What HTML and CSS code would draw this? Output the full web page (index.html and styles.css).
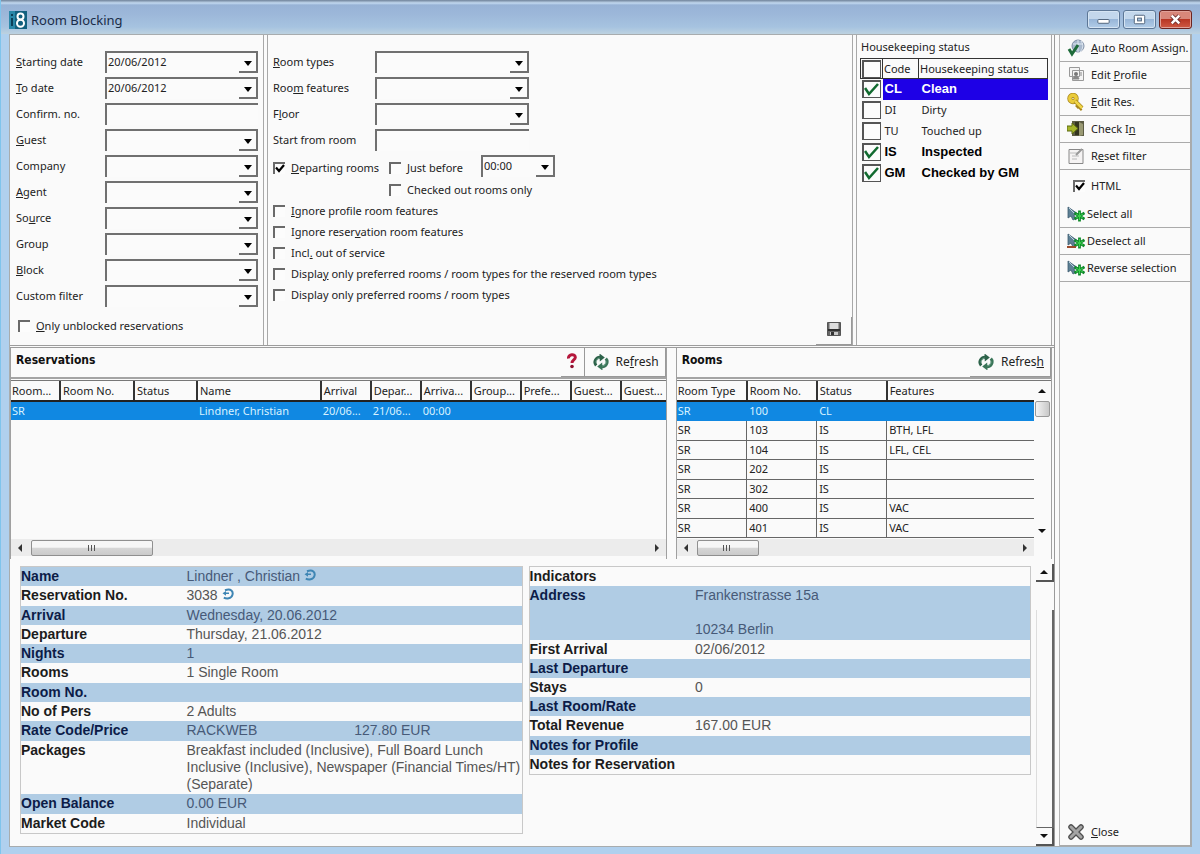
FILE: index.html
```html
<!DOCTYPE html>
<html lang="en">
<head>
<meta charset="utf-8">
<title>Room Blocking</title>
<link rel="stylesheet" href="styles.css">
</head>
<body>
<svg class="defs" aria-hidden="true">
  <symbol id="refresh" viewBox="0 0 16 16">
    <path d="M3.200 11.500A5 5 0 0 1 7 3.200" fill="none" stroke="#2c6249" stroke-width="3"/>
    <path d="M6.500 -.5 11.800 3.400 6.800 7.400z" fill="#2c6249"/>
    <path d="M12.800 4.500A5 5 0 0 1 9 12.800" fill="none" stroke="#3a7558" stroke-width="3"/>
    <path d="M9.500 16.500 4.200 12.600 9.200 8.600z" fill="#3a7558"/>
    <path d="M3 8.500C3 6 4.500 4.500 6.500 4M13 7.500c0 2.500-1.500 4-3.500 4.500" fill="none" stroke="#8dbba4" stroke-width=".8"/>
  </symbol>
  <symbol id="pick" viewBox="0 0 18 16">
    <path d="M1 1v11l3-2 2 4 2-1-1-4 4-1z" fill="#5d8094" stroke="#3c5a70" stroke-width=".8"/>
    <path d="M2 2l5 5" stroke="#bcd3df" stroke-width="1"/>
    <path d="M12.500 4.500v11M7.500 7l10 6M17.500 7l-10 6" stroke="#128a2c" stroke-width="2.800"/>
    <path d="M12.500 6v8M9 8l7 4M16 8l-7 4" stroke="#3ad04c" stroke-width="1"/>
  </symbol>
  <symbol id="goto" viewBox="0 0 12 12">
    <path d="M3 2.200C9-.2 11.500 3.500 10.400 7 9.300 10.800 4.500 11 1.800 9.600" fill="none" stroke="#3f86b4" stroke-width="2"/>
    <path d="M.5 5.200 4 3v1.600h3v1.500H4v1.600z" fill="#3f86b4"/>
  </symbol>
</svg>
<div class="window">
  <header class="titlebar">
    <svg class="logo" viewBox="0 0 18 18" aria-hidden="true">
      <rect width="18" height="18" fill="#12607f"/>
      <path d="M0 0h6v18H0z" fill="#2a87a8"/>
      <path d="M3 7v8M3 3v2" stroke="#0c3f58" stroke-width="2"/>
      <circle cx="11.500" cy="5.500" r="3" fill="none" stroke="#fff" stroke-width="2"/>
      <circle cx="11.500" cy="12.300" r="3.500" fill="none" stroke="#fff" stroke-width="2"/>
    </svg>
    <h1>Room Blocking</h1>
    <div class="winbtns">
      <button aria-label="Minimize"><svg viewBox="0 0 32 18"><rect x="10" y="9" width="12" height="4" rx="1" fill="#fff" stroke="#4b6078"/></svg></button>
      <button aria-label="Maximize"><svg viewBox="0 0 32 18"><rect x="10.500" y="4.500" width="11" height="9" rx="1" fill="#fff" stroke="#4b6078"/><rect x="14" y="7.500" width="4" height="3" fill="#a9c5e2" stroke="#4b6078"/></svg></button>
      <button class="x" aria-label="Close window"><svg viewBox="0 0 32 18"><path d="M12 5l8 8M20 5l-8 8" stroke="#6d3030" stroke-width="4.500"/><path d="M12 5l8 8M20 5l-8 8" stroke="#fff" stroke-width="2.600"/></svg></button>
    </div>
  </header>

  <div class="client">
    <main>
      <section class="filters">
        <form class="pane guestform">
          <div class="fields">
            <label for="start"><u>S</u>tarting date</label><select id="start"><option>20/06/2012</option></select>
            <label for="to"><u>T</u>o date</label><select id="to"><option>20/06/2012</option></select>
            <label for="conf">Confirm. no.</label><input id="conf" type="text">
            <label for="guest"><u>G</u>uest</label><select id="guest"><option></option></select>
            <label for="company">Company</label><select id="company"><option></option></select>
            <label for="agent"><u>A</u>gent</label><select id="agent"><option></option></select>
            <label for="source">So<u>u</u>rce</label><select id="source"><option></option></select>
            <label for="group">Group</label><select id="group"><option></option></select>
            <label for="block"><u>B</u>lock</label><select id="block"><option></option></select>
            <label for="custom">Custom filter</label><select id="custom"><option></option></select>
          </div>
          <label class="check only"><input type="checkbox"><span><u>O</u>nly unblocked reservations</span></label>
        </form>

        <form class="pane roomform">
          <div class="fields">
            <label for="types"><u>R</u>oom types</label><select id="types"><option></option></select>
            <label for="feat">Roo<u>m</u> features</label><select id="feat"><option></option></select>
            <label for="floor">F<u>l</u>oor</label><select id="floor"><option></option></select>
            <label for="from">Start from room</label><input id="from" type="text">
          </div>
          <div class="departing">
            <label class="check first"><input type="checkbox" checked><span><u>D</u>eparting rooms</span></label>
            <label class="check before"><input type="checkbox"><span>Just before</span></label>
            <select aria-label="Time"><option>00:00</option></select>
          </div>
          <div class="checks">
            <label class="check sub"><input type="checkbox"><span>Checked out rooms only</span></label>
            <label class="check"><input type="checkbox"><span><u>I</u>gnore profile room features</span></label>
            <label class="check"><input type="checkbox"><span>Ignore reser<u>v</u>ation room features</span></label>
            <label class="check"><input type="checkbox"><span>Incl<u>.</u> out of service</span></label>
            <label class="check"><input type="checkbox"><span>Displa<u>y</u> only preferred rooms / room types for the reserved room types</span></label>
            <label class="check"><input type="checkbox"><span>Display only preferred rooms / room types</span></label>
          </div>
          <button type="button" class="save" aria-label="Save"><svg viewBox="0 0 16 16"><path d="M1.500 1.500h13v13h-13z" fill="#666" stroke="#555"/><path d="M3.500 2h9v6h-9z" fill="#dedede"/><path d="M2 8h12v2H2z" fill="#303030"/><path d="M4 11h8v3H4z" fill="#c8c8c8"/><path d="M5 11h3v3H5z" fill="#333"/></svg></button>
        </form>

        <section class="pane hk">
          <h2>Housekeeping status</h2>
          <table>
            <thead><tr><th><input type="checkbox" aria-label="All"></th><th>Code</th><th>Housekeeping status</th></tr></thead>
            <tbody>
              <tr class="on cur"><td><input type="checkbox" checked aria-label="Clean"></td><td>CL</td><td>Clean</td></tr>
              <tr><td><input type="checkbox" aria-label="Dirty"></td><td>DI</td><td>Dirty</td></tr>
              <tr><td><input type="checkbox" aria-label="Touched up"></td><td>TU</td><td>Touched up</td></tr>
              <tr class="on"><td><input type="checkbox" checked aria-label="Inspected"></td><td>IS</td><td>Inspected</td></tr>
              <tr class="on"><td><input type="checkbox" checked aria-label="Checked by GM"></td><td>GM</td><td>Checked by GM</td></tr>
            </tbody>
          </table>
        </section>
      </section>

      <section class="lists">
        <section class="list">
          <header>
            <h2>Reservations</h2>
            <button class="help" aria-label="Help"><svg viewBox="0 0 10 16"><path d="M1.500 5.500C1 1 8.500.5 8.300 4.500 8.200 7 5 7 5 10" fill="none" stroke="#b5173c" stroke-width="3"/><circle cx="5" cy="13.500" r="1.800" fill="#8f1230"/></svg></button>
            <button class="tool"><svg viewBox="0 0 16 16"><use href="#refresh"/></svg><span>Re<u>f</u>resh</span></button>
          </header>
          <div class="body">
            <table class="grid res">
              <colgroup><col class="w49"><col class="w74"><col class="w63"><col><col class="w50"><col class="w50"><col class="w50"><col class="w50"><col class="w50"><col class="w50"><col class="w45"></colgroup>
              <thead><tr><th>Room...</th><th>Room No.</th><th>Status</th><th>Name</th><th>Arrival</th><th>Depar...</th><th>Arriva...</th><th>Group...</th><th>Prefe...</th><th>Guest...</th><th>Guest...</th></tr></thead>
              <tbody><tr class="sel"><td>SR</td><td></td><td></td><td>Lindner, Christian</td><td>20/06...</td><td>21/06...</td><td>00:00</td><td></td><td></td><td></td><td></td></tr></tbody>
            </table>
          </div>
          <div class="hscroll"><i class="arr left"></i><i class="thumb long"></i><i class="arr right"></i></div>
        </section>

        <section class="list">
          <header>
            <h2>Rooms</h2>
            <button class="tool"><svg viewBox="0 0 16 16"><use href="#refresh"/></svg><span>Refres<u>h</u></span></button>
          </header>
          <div class="body">
            <table class="grid rooms">
              <colgroup><col class="w70"><col class="w70"><col class="w70"><col></colgroup>
              <thead><tr><th>Room Type</th><th>Room No.</th><th>Status</th><th>Features</th></tr></thead>
              <tbody>
                <tr class="sel"><td>SR</td><td>100</td><td>CL</td><td></td></tr>
                <tr><td>SR</td><td>103</td><td>IS</td><td>BTH, LFL</td></tr>
                <tr><td>SR</td><td>104</td><td>IS</td><td>LFL, CEL</td></tr>
                <tr><td>SR</td><td>202</td><td>IS</td><td></td></tr>
                <tr><td>SR</td><td>302</td><td>IS</td><td></td></tr>
                <tr><td>SR</td><td>400</td><td>IS</td><td>VAC</td></tr>
                <tr><td>SR</td><td>401</td><td>IS</td><td>VAC</td></tr>
              </tbody>
            </table>
            <div class="vscroll"><i class="arr up"></i><i class="vthumb"></i><i class="arr down"></i></div>
          </div>
          <div class="hscroll inset"><i class="arr left"></i><i class="thumb"></i><i class="arr right"></i></div>
        </section>
      </section>

      <section class="details">
        <div class="info">
          <table class="facts stay">
            <tr><th>Name</th><td colspan="2">Lindner , Christian <svg class="go" viewBox="0 0 12 12"><use href="#goto"/></svg></td></tr>
            <tr><th>Reservation No.</th><td colspan="2">3038 <svg class="go" viewBox="0 0 12 12"><use href="#goto"/></svg></td></tr>
            <tr><th>Arrival</th><td colspan="2">Wednesday, 20.06.2012</td></tr>
            <tr><th>Departure</th><td colspan="2">Thursday, 21.06.2012</td></tr>
            <tr><th>Nights</th><td colspan="2">1</td></tr>
            <tr><th>Rooms</th><td colspan="2">1 Single Room</td></tr>
            <tr><th>Room No.</th><td colspan="2"></td></tr>
            <tr><th>No of Pers</th><td colspan="2">2 Adults</td></tr>
            <tr><th>Rate Code/Price</th><td>RACKWEB</td><td>127.80 EUR</td></tr>
            <tr><th>Packages</th><td colspan="2">Breakfast included (Inclusive), Full Board Lunch<br>Inclusive (Inclusive), Newspaper (Financial Times/HT)<br>(Separate)</td></tr>
            <tr><th>Open Balance</th><td colspan="2">0.00 EUR</td></tr>
            <tr><th>Market Code</th><td colspan="2">Individual</td></tr>
          </table>
          <table class="facts profile">
            <tr><th>Indicators</th><td></td></tr>
            <tr><th>Address</th><td>Frankenstrasse 15a<br><br>10234 Berlin</td></tr>
            <tr><th>First Arrival</th><td>02/06/2012</td></tr>
            <tr><th>Last Departure</th><td></td></tr>
            <tr><th>Stays</th><td>0</td></tr>
            <tr><th>Last Room/Rate</th><td></td></tr>
            <tr><th>Total Revenue</th><td>167.00 EUR</td></tr>
            <tr><th>Notes for Profile</th><td></td></tr>
            <tr><th>Notes for Reservation</th><td></td></tr>
          </table>
        </div>
        <div class="oldscroll"><button aria-label="Scroll up"><i class="arr up"></i></button><span></span><button aria-label="Scroll down"><i class="arr down"></i></button></div>
      </section>
    </main>

    <aside>
      <button><svg viewBox="0 0 18 18"><circle cx="11" cy="7" r="6" fill="#a8b8cc" stroke="#7d8ca3"/><path d="M11 1v12M6 5h10M14 2c3 4 2 8-1 11" fill="none" stroke="#dfe8f2"/><path d="M2 10l3 5 6-9" fill="none" stroke="#1e6b3a" stroke-width="3"/></svg><span><u>A</u>uto Room Assign.</span></button>
      <button><svg viewBox="0 0 18 18"><path d="M2.500 1.500h10v9h-10zM5.500 4.500h11v10h-11z" fill="#f4f4f4" stroke="#999"/><circle cx="9" cy="8" r="2" fill="#777"/><path d="M6 13c1-4 5-4 6 0zM12 7h3M13 9h2" fill="#888" stroke="#888"/></svg><span>Edit <u>P</u>rofile</span></button>
      <button><svg viewBox="0 0 18 18"><circle cx="6" cy="5.500" r="3.200" fill="none" stroke="#a8861a" stroke-width="5"/><circle cx="6" cy="5.500" r="3.200" fill="none" stroke="#eacb3a" stroke-width="3.500"/><path d="M8 8l7 7M11.500 12.500l-2 2M14 15l-1.500 1.500" stroke="#a8861a" stroke-width="4"/><path d="M8 8l7 7" stroke="#f0d548" stroke-width="2.500"/></svg><span><u>E</u>dit Res.</span></button>
      <button><svg viewBox="0 0 18 18"><path d="M5 1h12v15H5z" fill="#5c5c44"/><path d="M8 2h4v13H8z" fill="#34341f"/><path d="M12 2l4 2v11l-4 1z" fill="#9a9a74"/><path d="M0 6h5V3l6 5.500L5 14v-3H0z" fill="#a6b52a" stroke="#5c6a14"/></svg><span>Check I<u>n</u></span></button>
      <button><svg viewBox="0 0 18 18"><path d="M2 2.500h14v14H2z" fill="#f5f3f3" stroke="#888"/><path d="M2 6h9M5 9h7M5 12h5" stroke="#bbb"/><path d="M9 8l6-6" stroke="#999" stroke-width="2"/></svg><span>R<u>e</u>set filter</span></button>
      <label class="check html"><input type="checkbox" checked><span>HTML</span></label>
      <button class="tight"><svg viewBox="0 0 18 16"><use href="#pick"/></svg><span>Select all</span></button>
      <button class="tight"><svg viewBox="0 0 18 16"><use href="#pick"/><path d="M0 14h9" stroke="#9b4a2c" stroke-width="2"/></svg><span>Deselect all</span></button>
      <button class="tight"><svg viewBox="0 0 18 16"><use href="#pick"/></svg><span>Reverse selection</span></button>
      <button class="close"><svg viewBox="0 0 18 18"><path d="M4 4l10 10M14 4L4 14" stroke="#4f4f4f" stroke-width="5.500" stroke-linecap="round"/><path d="M4 4l10 10M14 4L4 14" stroke="#a4a4a4" stroke-width="3" stroke-linecap="round"/></svg><span><u>C</u>lose</span></button>
    </aside>
  </div>
</div>
</body>
</html>
```

FILE: styles.css
```css
* { box-sizing: border-box; }

body {
  margin: 0;
  font: 11px/14px "Noto Sans", "DejaVu Sans Condensed", sans-serif;
  color: #222;
}

h1, h2 { margin: 0; font-weight: normal; }
button, input, select { font: inherit; color: inherit; }
button { border: 0; padding: 0; background: none; }
table { border-collapse: collapse; border-spacing: 0; }
th { text-align: left; font-weight: normal; }
.defs { position: absolute; width: 0; height: 0; }

.window {
  min-height: 100vh;
  display: flex;
  flex-direction: column;
  padding: 0 8px 8px;
  background: #b0d0ee;
  border-left: 1px solid #7fc4ec;
}

.titlebar {
  display: flex;
  align-items: center;
  gap: 4px;
  height: 34px;
  margin: 0 -8px;
  padding: 5px 0 0 8px;
  background: linear-gradient(#6f8299 0, #c3d9f0 3px, #98b3d6 5px, #9db8da 15px, #a6c3e0 27px, #bdd2e0 34px);
}
.titlebar h1 { flex: 1; font: 13px/18px "Noto Sans", sans-serif; color: #1a2c48; }
.logo { width: 18px; height: 18px; }
.winbtns { display: flex; gap: 3px; padding-right: 8px; }
.winbtns button {
  width: 33px;
  height: 19px;
  border: 1px solid #5d7796;
  border-radius: 3px;
  box-shadow: inset 0 0 0 1px #d5e4f3;
  background: linear-gradient(#c3d7ec 45%, #98b6d8 50%, #b2cde8);
}
.winbtns svg { display: block; width: 31px; height: 17px; }
.winbtns .x { border-color: #6c2420; box-shadow: inset 0 0 0 1px #e0a198; background: linear-gradient(#d8877a 45%, #b83624 50%, #cf5a44); }

.client {
  flex: 1;
  display: grid;
  grid-template-columns: minmax(0, 1fr) 132px;
  gap: 4px;
  border: 1px solid #a8acae;
  background: #fafafa;
}
main {
  display: grid;
  grid-template-rows: auto auto 1fr;
  border-right: 1px solid #9a9a9a;
}

/* Filters */
.filters {
  display: grid;
  grid-template-columns: 254px minmax(0, 1fr) 196px;
  gap: 3px;
  padding-right: 2px;
  border-bottom: 3px double #9c9c9c;
}
.pane { border-right: 1px solid #a8a8a8; }
.pane + .pane { border-left: 1px solid #a8a8a8; }
.guestform, .roomform { padding: 16px 5px 12px 6px; }
.fields { display: grid; grid-template-columns: 89px 153px; row-gap: 4px; align-items: center; }
.roomform { padding-left: 5px; }
.roomform .fields { grid-template-columns: 102px 154px; }

select, input[type="text"] {
  appearance: none;
  height: 22px;
  width: 100%;
  min-width: 0;
  margin: 0;
  padding: 0 0 2px 1px;
  border: 0 solid #707070;
  border-width: 2px 0 0 2px;
  border-radius: 0;
  background: #fbfbfb;
}
select {
  border-right-width: 2px;
  background:
    url("data:image/svg+xml,%3Csvg xmlns='http://www.w3.org/2000/svg' width='8' height='5'%3E%3Cpath d='M0 0h8L4 5z'/%3E%3C/svg%3E") right 4px top 8px no-repeat,
    linear-gradient(#707070, #707070) right bottom / 17px 2px no-repeat,
    #fbfbfb;
}

.check { display: flex; align-items: center; gap: 6px; }
input[type="checkbox"] {
  appearance: none;
  flex: none;
  width: 12px;
  height: 12px;
  margin: 0;
  border: 0 solid #6a6a6a;
  border-width: 2px 0 0 2px;
  background: #fcfcfc no-repeat center;
}
.check input:checked {
  background-image: url("data:image/svg+xml,%3Csvg xmlns='http://www.w3.org/2000/svg' width='10' height='10'%3E%3Cpath d='M1 3.500l3 3.500 5-6' fill='none' stroke='%23000' stroke-width='2.200'/%3E%3C/svg%3E");
}
.only { margin: 12px 0 0 2px; height: 14px; }

.roomform { position: relative; }
.departing { display: flex; align-items: center; height: 22px; margin-top: 4px; }
.departing .check { margin-top: 4px; white-space: nowrap; }
.departing .first { width: 116px; }
.departing .before { width: 92px; }
.departing select { width: 74px; }
.checks { display: grid; grid-auto-rows: 21px; padding-top: 2px; }
.checks .sub { margin-left: 116px; }
.save {
  position: absolute;
  right: 0;
  bottom: 0;
  width: 36px;
  height: 28px;
  border-right: 1px solid #999;
  border-bottom: 1px solid #999;
}
.save svg { width: 16px; height: 16px; }

/* Housekeeping */
.hk { padding: 5px 3px 0 3px; }
.hk h2 { padding: 0 1px; font-size: 11px; line-height: 14px; }
.hk table { width: 100%; margin-top: 4px; table-layout: fixed; }
.hk th:nth-child(1) { width: 22px; }
.hk th:nth-child(2) { width: 36px; }
.hk th { height: 20px; border: 1px solid #333; padding: 0 1px; white-space: nowrap; }
.hk td { height: 21px; padding: 0 2px; }
.hk td:nth-child(3) { padding-left: 3px; }
.hk td:first-child, .hk th:first-child { padding: 0 0 0 1px; }
.hk input[type="checkbox"] { display: block; width: 19px; height: 18px; border: 1px solid #555; border-width: 2px 1px 1px 2px; }
.hk input:checked {
  background-image: url("data:image/svg+xml,%3Csvg xmlns='http://www.w3.org/2000/svg' width='16' height='15'%3E%3Cpath d='M1 6l4 6L14 2' fill='none' stroke='%23126b30' stroke-width='2.600'/%3E%3C/svg%3E");
}
.hk .on td { font: bold 13px/16px "Liberation Sans", sans-serif; color: #000; }
.hk .cur td + td { background: #1e00e6; color: #fff; }

/* Lists */
.lists {
  display: grid;
  grid-template-columns: minmax(0, 656fr) minmax(0, 376fr);
  gap: 9px;
  padding-right: 2px;
}
.list { display: flex; flex-direction: column; border: 1px solid #a0a0a0; border-width: 0 1px; }
.list header { display: flex; height: 31px; border-bottom: 2px solid #a4a4a4; }
.list h2 { flex: 1; padding: 5px; font: bold 12px/14px "DejaVu Sans Condensed", "Noto Sans", sans-serif; color: #111; }
.list header button { border-right: 1px solid #999; border-bottom: 1px solid #999; }
.tool { display: flex; align-items: center; gap: 7px; padding: 0 6px 0 8px; font-size: 12px; }
.tool svg { width: 16px; height: 16px; }
.help { width: 24px; }
.help svg { width: 10px; height: 16px; }
.body { flex: 1; display: flex; align-items: flex-start; border-top: 1px solid #777; margin-top: 1px; }
.grid { flex: 1; width: 100%; min-width: 0; table-layout: fixed; }
.grid th, .grid td { padding: 0 0 0 2px; white-space: nowrap; overflow: hidden; }
.grid th { height: 20px; border-left: 2px solid #333; border-bottom: 2px solid #222; }
.grid th:first-child, .grid td:first-child { border-left: 0; padding-left: 1px; }
.grid td { height: 19px; }
.grid .sel td { background: #1088e2; color: #d8f2ff; }
.w45 { width: 45px; } .w49 { width: 49px; } .w50 { width: 50px; }
.w63 { width: 63px; } .w70 { width: 70px; } .w74 { width: 74px; }
.rooms { height: 157px; }
.rooms td { border-left: 1px solid #666; border-bottom: 1px solid #666; }
.rooms .sel td { border-color: #1088e2; }

.arr { display: block; width: 0; height: 0; border: 4px solid transparent; }
.arr.left { border-width: 4px 4px 4px 0; border-right-color: #333; }
.arr.right { border-width: 4px 0 4px 4px; border-left-color: #333; margin-left: auto; }
.arr.up { border-width: 0 4px 4px; border-bottom-color: #111; }
.arr.down { border-width: 4px 4px 0; border-top-color: #111; }
.hscroll { display: flex; align-items: center; gap: 9px; height: 17px; margin: 1px 0 3px; padding: 0 7px; background: #ececec; }
.hscroll.inset { margin-right: 17px; }
.thumb {
  width: 62px;
  height: 16px;
  border: 1px solid #8f8f8f;
  border-radius: 2px;
  background:
    repeating-linear-gradient(90deg, #555 0 1px, transparent 1px 3px) center / 9px 6px no-repeat,
    linear-gradient(#f6f6f6 45%, #d6d6d6 50%, #cacaca);
}
.thumb.long { width: 122px; }
.vscroll { width: 17px; display: flex; flex-direction: column; align-items: center; align-self: stretch; padding: 8px 0 5px; }
.vthumb { width: 15px; height: 16px; margin-top: 8px; border: 1px solid #999; border-radius: 2px; background: linear-gradient(90deg, #f4f4f4, #c8c8c8); }
.vscroll .down { margin-top: auto; }

/* Details */
.details { display: flex; padding-top: 5px; }
.info { flex: 1; display: grid; grid-template-columns: 503fr 503fr; gap: 6px; align-items: start; padding: 2px 5px 12px 10px; }
.facts { width: 100%; border: 1px solid #c8c8c8; table-layout: fixed; font: 14px/17px "Liberation Sans", sans-serif; color: #555; }
.facts th, .facts td { padding: 1px 0; vertical-align: top; }
.facts th { width: 166px; font-weight: bold; color: #1c1c1c; white-space: nowrap; }
.facts td { white-space: nowrap; }
.stay { height: 268px; }
.profile { height: 209px; }
.stay tr:nth-child(odd), .profile tr:nth-child(even) { background: #b0cce4; color: #475a78; }
.stay tr:nth-child(odd) th, .profile tr:nth-child(even) th { color: #0c1c48; }
.go { width: 12px; height: 12px; }
.oldscroll { width: 18px; display: flex; flex-direction: column; }
.oldscroll button { width: 18px; height: 18px; display: grid; place-items: center; border-right: 2px solid #555; border-bottom: 2px solid #555; }
.oldscroll span { flex: 1; margin-top: 28px; border-right: 2px solid #666; border-bottom: 1px solid #666; border-left: 1px solid #ddd; }

/* Actions */
aside { display: flex; flex-direction: column; border-left: 1px solid #b4b4b4; border-right: 1px solid #aaa; }
aside button { display: flex; align-items: center; gap: 6px; height: 27px; padding: 0 0 1px 7px; border-bottom: 1px solid #aaa; white-space: nowrap; }
aside button svg { flex: none; width: 18px; height: 18px; }
aside .tight { gap: 2px; }
aside .html { height: 31px; padding: 0 0 0 13px; gap: 6px; }
aside .close { margin-top: auto; }
```
